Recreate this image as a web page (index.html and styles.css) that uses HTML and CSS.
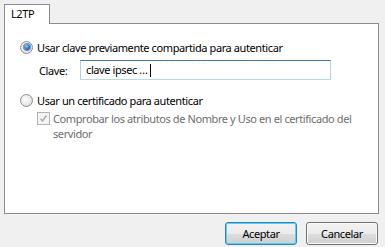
FILE: index.html
```html
<!DOCTYPE html>
<html>
<head>
<meta charset="utf-8">
<link rel="stylesheet" href="styles.css">
</head>
<body>
<div class="dialog">
  <div class="tabs">
    <div class="tab">L2TP</div>
  </div>
  <div class="panel">
    <label class="option">
      <span class="radio checked"><span class="dot"></span></span>
      <span class="label">Usar clave previamente compartida para autenticar</span>
    </label>
    <div class="keyrow">
      <span class="keylabel">Clave:</span>
      <div class="input">clave ipsec …<span class="caret"></span></div>
    </div>
    <label class="option second">
      <span class="radio"></span>
      <span class="label">Usar un certificado para autenticar</span>
    </label>
    <div class="check-row">
      <span class="checkbox">
        <svg width="9" height="9" viewBox="0 0 9 9"><path d="M1.5 4.8 L3.5 7 L7.5 1.5" fill="none" stroke="#a8a8a8" stroke-width="1.4"/></svg>
      </span>
      <span class="check-label">Comprobar los atributos de Nombre y Uso en el certificado del servidor</span>
    </div>
  </div>
  <div class="footer">
    <button class="btn default">Aceptar</button>
    <button class="btn">Cancelar</button>
  </div>
</div>
</body>
</html>
```
FILE: styles.css
```css
html, body {
  margin: 0;
  padding: 0;
  background: #f0f0f0;
}
body {
  font-family: "Noto Sans", "Open Sans", sans-serif;
  font-size: 11px;
  letter-spacing: -0.4px;
  color: #000;
}
.dialog {
  width: 385px;
  height: 247px;
  padding: 4px 6px 0 4px;
  box-sizing: border-box;
}
.tabs {
  display: flex;
  height: 19px;
}
.tab {
  width: 46px;
  height: 20px;
  box-sizing: border-box;
  border: 1px solid #898c95;
  border-bottom: none;
  background: #fff;
  padding: 2px 0 0 6px;
  line-height: 14px;
  position: relative;
  z-index: 1;
}
.panel {
  height: 191px;
  box-sizing: border-box;
  border: 1px solid #898c95;
  background: #fff;
  padding: 16px 0 0 15px;
}
.option {
  display: flex;
  align-items: center;
  height: 14px;
  gap: 4px;
}
.option.second {
  margin-top: 13px;
}
.radio {
  width: 13px;
  height: 13px;
  box-sizing: border-box;
  border-radius: 50%;
  border: 1px solid #8e8f8f;
  background: radial-gradient(circle at 40% 40%, #fff 0%, #e6e6e6 60%, #d2d2d2 100%);
  display: flex;
  align-items: center;
  justify-content: center;
}
.radio.checked .dot {
  width: 6px;
  height: 6px;
  border-radius: 50%;
  background: radial-gradient(circle at 40% 35%, #8ad0f5 0%, #2a6fb8 60%, #0d3f7a 100%);
  box-shadow: 0 0 0 1px #6c93c0;
}
.keyrow {
  display: flex;
  align-items: center;
  margin: 6px 0 0 19px;
  gap: 0;
}
.keylabel {
  width: 41px;
}
.input {
  width: 251px;
  height: 20px;
  box-sizing: border-box;
  border: 1px solid #abadb3;
  border-top-color: #3d7bad;
  border-left-color: #b5cfe7;
  border-right-color: #b5cfe7;
  border-bottom-color: #b7d9ed;
  padding: 0 5px;
  line-height: 18px;
  display: flex;
  align-items: center;
}
.caret {
  display: inline-block;
  width: 1px;
  height: 13px;
  background: #000;
  margin-left: 2px;
}
.check-row {
  display: flex;
  align-items: flex-start;
  margin: 4px 0 0 17px;
  gap: 3px;
  color: #6d6d6d;
}
.checkbox {
  width: 13px;
  height: 13px;
  box-sizing: border-box;
  border: 1px solid #b1b1b1;
  background: #f4f4f4;
  display: flex;
  align-items: center;
  justify-content: center;
  flex: none;
  margin-top: 1px;
}
.check-label {
  width: 305px;
  line-height: 15px;
}
.footer {
  display: flex;
  justify-content: flex-end;
  gap: 9px;
  margin-top: 8px;
  padding-right: 1px;
}
.btn {
  width: 72px;
  height: 23px;
  box-sizing: border-box;
  font: inherit;
  letter-spacing: inherit;
  color: #000;
  border: 1px solid #707070;
  border-radius: 3px;
  background: linear-gradient(#f2f2f2 0%, #ebebeb 50%, #dddddd 51%, #cfcfcf 100%);
  box-shadow: inset 0 0 0 1px #fbfbfb;
  padding: 0;
}
.btn.default {
  border-color: #3c7fb1;
  box-shadow: inset 0 0 0 1px #48d7fb;
}
```
